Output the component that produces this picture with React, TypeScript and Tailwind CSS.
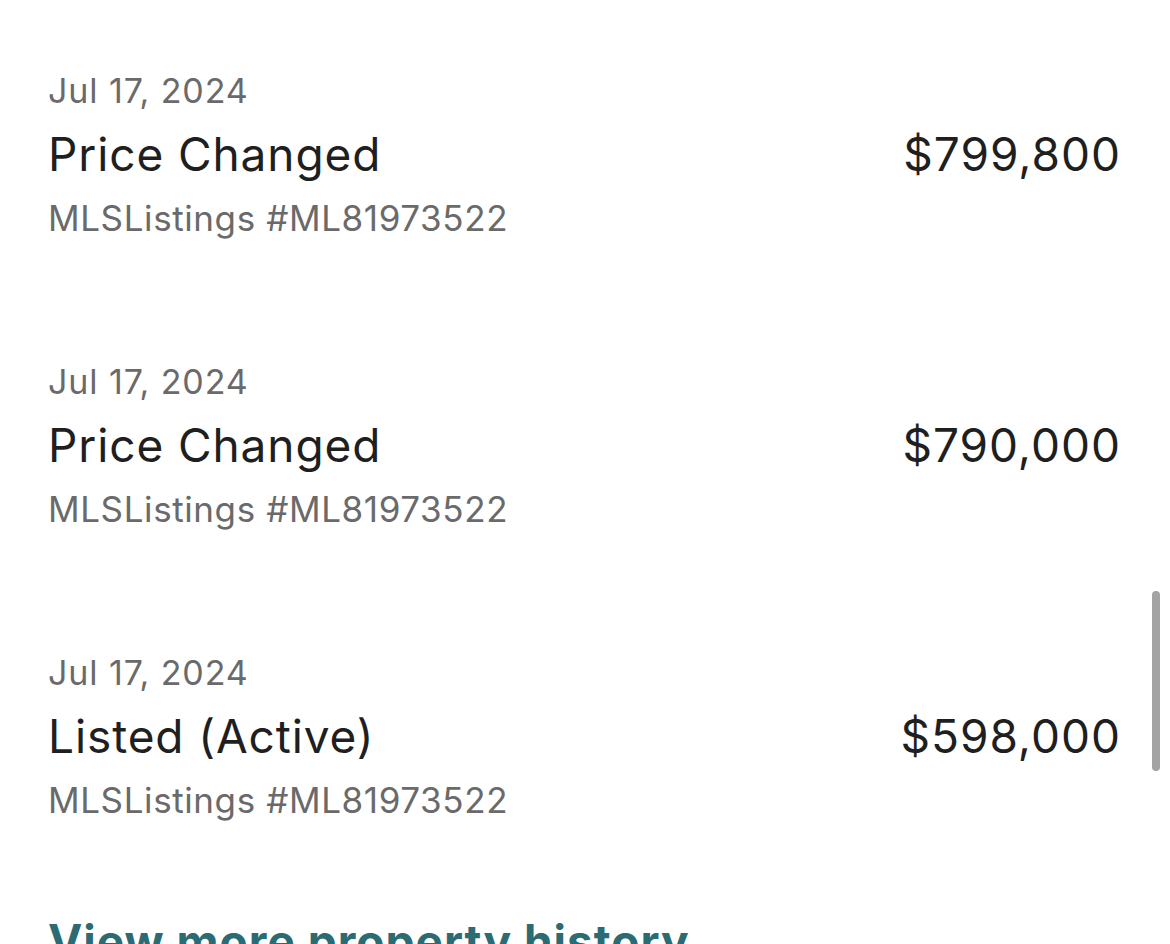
const events = [
  { date: 'Jul 17, 2024', label: 'Price Changed', price: '$799,800' },
  { date: 'Jul 17, 2024', label: 'Price Changed', price: '$790,000' },
  { date: 'Jul 17, 2024', label: 'Listed (Active)', price: '$598,000' },
]

export default function App() {
  return (
    <div
      className="relative h-[944px] w-[1170px] overflow-hidden bg-white"
      style={{ fontFamily: 'Inter, "Noto Sans", sans-serif' }}
    >
      <div className="pl-[48px] pr-[49px] pt-[71px]">
        {events.map((ev, i) => (
          <div key={i} className={i > 0 ? 'mt-[124px]' : ''}>
            <div className="text-[34px] leading-[40px] tracking-[0.9px] text-[#6a6a6a]">{ev.date}</div>
            <div className="mt-[17px] flex items-baseline justify-between text-[46px] leading-[53px] text-[#1f1f1f]">
              <span className="tracking-[0.9px]">{ev.label}</span>
              <span className="tracking-[1px]">{ev.price}</span>
            </div>
            <div className="mt-[17px] text-[35px] leading-[40px] tracking-[0.6px] text-[#6a6a6a]">
              MLSListings #ML81973522
            </div>
          </div>
        ))}
        <div className="mt-[95px] text-[46px] font-bold leading-[53px] tracking-[1px] text-[#2b6b74]">
          View more property history
        </div>
      </div>
      <div className="absolute left-[1152px] top-[591px] h-[180px] w-[8px] rounded-full bg-[#a3a3a3]" />
    </div>
  )
}
